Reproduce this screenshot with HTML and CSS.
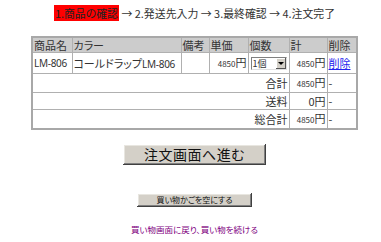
FILE: index.html
```html
<!DOCTYPE html>
<html lang="ja">
<head>
<meta charset="utf-8">
<title>商品の確認</title>
<link rel="stylesheet" href="styles.css">
</head>
<body>
<div class="page">
  <div class="steps"><span class="current">1.商品の確認</span> → 2.発送先入力 → 3.最終確認 → 4.注文完了</div>
  <table class="cart">
    <colgroup>
      <col class="c1"><col class="c2"><col class="c3"><col class="c4"><col class="c5"><col class="c6"><col class="c7">
    </colgroup>
    <tr class="head">
      <th>商品名</th><th>カラー</th><th>備考</th><th>単価</th><th>個数</th><th>計</th><th>削除</th>
    </tr>
    <tr class="item">
      <td class="lat">LM-806</td>
      <td>コールドラップ<span class="lat">LM-806</span></td>
      <td></td>
      <td class="num"><span class="n">4850</span>円</td>
      <td><div class="select"><span class="sel-text">1個</span><span class="sel-btn"><span class="tri"></span></span></div></td>
      <td class="num"><span class="n">4850</span>円</td>
      <td><a class="del" href="#">削除</a></td>
    </tr>
    <tr class="sum">
      <td colspan="5" class="label">合計</td>
      <td class="num"><span class="n">4850</span>円</td>
      <td>-</td>
    </tr>
    <tr class="sum">
      <td colspan="5" class="label">送料</td>
      <td class="num">0円</td>
      <td>-</td>
    </tr>
    <tr class="sum">
      <td colspan="5" class="label">総合計</td>
      <td class="num"><span class="n">4850</span>円</td>
      <td>-</td>
    </tr>
  </table>
  <div class="actions">
    <button class="btn btn-order" type="button">注文画面へ進む</button>
    <button class="btn btn-empty" type="button">買い物かごを空にする</button>
    <a class="back" href="#">買い物画面に戻り、買い物を続ける</a>
  </div>
</div>
</body>
</html>
```

FILE: styles.css
```css
html, body {
  margin: 0;
  padding: 0;
  background: #ffffff;
}
body {
  font-family: "Noto Sans CJK JP", "Noto Sans", sans-serif;
  font-feature-settings: "palt";
  color: #333;
}
.page {
  width: 373px;
  padding-left: 8px;
  display: flex;
  flex-direction: column;
  align-items: center;
}
.steps {
  margin-top: 6px;
  font-size: 10.9px;
  line-height: 15px;
  height: 15px;
  white-space: nowrap;
  color: #333;
}
.steps .current {
  background: #ff0000;
  color: #222;
  padding: 0 1px;
}
.cart {
  margin-top: 15px;
  width: 325px;
  border-collapse: collapse;
  border: 2px solid #a8a8a8;
  table-layout: fixed;
  font-size: 11px;
}
.c1 { width: 40px; }
.c2 { width: 109px; }
.c3 { width: 28px; }
.c4 { width: 39px; }
.c5 { width: 41px; }
.c6 { width: 38px; }
.c7 { width: 30px; }
.cart th, .cart td {
  border: 1px solid #b0b0b0;
  padding: 0 1px;
  white-space: nowrap;
  overflow: hidden;
  text-align: left;
  font-weight: normal;
}
.lat {
  font-family: "Noto Sans", sans-serif;
  font-size: 10px;
  letter-spacing: -0.3px;
}
.head th {
  background: #cccccc;
  height: 14px;
  line-height: 14px;
}
.item td {
  height: 18px;
  line-height: 18px;
}
.sum td {
  height: 16px;
  line-height: 16px;
}
.cart td.num, .cart td.label {
  text-align: right;
}
.n {
  font-size: 8px;
}
.del {
  color: #2222ee;
  text-decoration: underline;
}
.select {
  display: flex;
  align-items: center;
  width: 36px;
  height: 13px;
  margin-left: 1px;
  box-sizing: border-box;
  border: 1px solid #808080;
  border-right-color: #e0e0e0;
  border-bottom-color: #e0e0e0;
  background: #fff;
}
.sel-text {
  flex: 1;
  font-size: 9px;
  line-height: 11px;
  padding-left: 1px;
  white-space: nowrap;
}
.sel-btn {
  width: 10px;
  height: 11px;
  flex: none;
  background: #d4d0c8;
  box-shadow: inset -1px -1px #555, inset 1px 1px #fff;
  display: flex;
  align-items: center;
  justify-content: center;
}
.tri {
  width: 0;
  height: 0;
  border-left: 3px solid transparent;
  border-right: 3px solid transparent;
  border-top: 3px solid #000;
}
.actions {
  display: flex;
  flex-direction: column;
  align-items: center;
}
.btn {
  font-family: "Noto Sans CJK JP", sans-serif;
  font-feature-settings: "palt";
  background: #d4d0c8;
  color: #111;
  border: none;
  padding: 0;
  box-shadow: inset -1px -1px #404040, inset 1px 1px #ffffff, inset -2px -2px #808080, inset 2px 2px #e8e6e0;
}
.btn-order {
  margin-top: 14px;
  width: 143px;
  height: 21px;
  font-size: 14px;
  line-height: 21px;
  letter-spacing: 0.5px;
}
.btn-empty {
  margin-top: 28px;
  width: 115px;
  height: 14px;
  font-size: 8px;
  line-height: 14px;
}
.back {
  margin-top: 17px;
  font-size: 8.5px;
  line-height: 10px;
  color: #800080;
  text-decoration: underline;
}
```
